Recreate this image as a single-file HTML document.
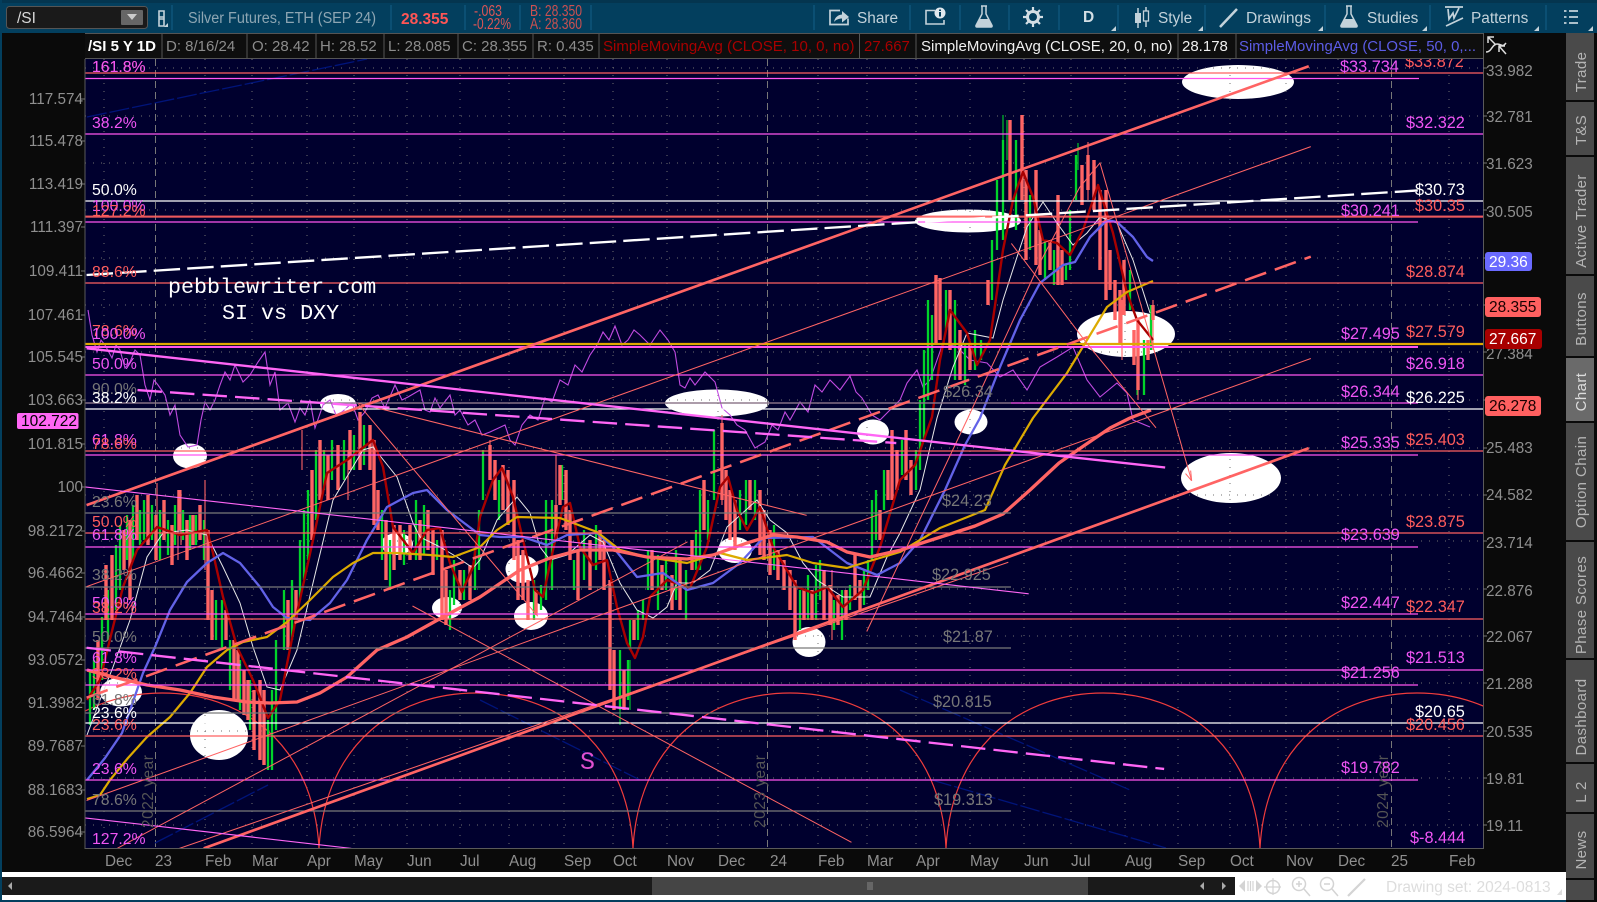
<!DOCTYPE html>
<html><head><meta charset="utf-8"><title>/SI chart</title>
<style>
html,body{margin:0;padding:0;background:#0a0a0a;width:1597px;height:902px;overflow:hidden}
svg{position:absolute;left:0;top:0;display:block}
text{font-family:"Liberation Sans",sans-serif;font-size:15.5px;white-space:pre}
.m{fill:#f055f5}.s{fill:#ff5c5c}.w{fill:#fff}.g{fill:#777}
.ax text{fill:#8f8f8f;font-size:15.3px}
.tb{fill:#c3d2da;font-size:15.4px}
.tab{fill:#b4b4b4;font-size:15px;letter-spacing:.4px;text-anchor:middle}
.lg{font-size:15px;fill:#8c8c8c}
.pc text{font-size:15.8px}
.d text{font-size:16.3px}
.yr{fill:#555;font-size:15.5px;letter-spacing:.5px}
</style></head><body>
<svg width="1597" height="902" viewBox="0 0 1597 902" xmlns="http://www.w3.org/2000/svg">
<defs><clipPath id="c"><rect x="85" y="59" width="1398" height="789"/></clipPath></defs>

<!-- frame -->
<rect width="1597" height="902" fill="#0a0a0a"/>
<rect width="1597" height="33" fill="#033f5e"/>
<rect width="1597" height="3" fill="#04354f"/>
<rect x="0" y="0" width="2" height="902" fill="#033f5e"/>
<rect x="0" y="900" width="1597" height="2" fill="#033f5e"/>

<!-- toolbar -->
<rect x="6.5" y="6.5" width="141" height="22" rx="3" fill="#1a1a1a" stroke="#555"/>
<text x="17" y="23" fill="#d8d8d8" font-size="15">/SI</text>
<rect x="121" y="10" width="22" height="15" rx="1" fill="#666"/>
<path d="M127 14h10l-5 6z" fill="#ccc"/>
<path d="M159 11h5v8h-5zM159 17h5v9h-5z" fill="none" stroke="#c3d2da" stroke-width="1.6"/>
<path d="M168 27h-4l4-4z" fill="#c3d2da"/>
<g stroke="#0e557a" stroke-width="1.5">
<path d="M172 5V30M391 5V30M465 5V30M520 5V30M591 5V30M814 5V30M910 5V30M960 5V30M1009 5V30M1059 5V30M1118 5V30M1205 5V30M1325 5V30M1430 5V30M1546 5V30"/>
</g>
<text x="188" y="23" fill="#8ea6b3" font-size="15" textLength="188" lengthAdjust="spacingAndGlyphs">Silver Futures, ETH (SEP 24)</text>
<text x="401" y="24" fill="#ff5555" font-size="17.7" font-weight="bold">28.355</text>
<text x="474" y="16" fill="#dd5555" font-size="12" textLength="28" lengthAdjust="spacingAndGlyphs">-.063</text>
<text x="473" y="29" fill="#dd5555" font-size="12" textLength="38" lengthAdjust="spacingAndGlyphs">-0.22%</text>
<text x="530" y="16" fill="#cc5050" font-size="12" textLength="52" lengthAdjust="spacingAndGlyphs">B: 28.350</text>
<text x="530" y="29" fill="#cc5050" font-size="12" textLength="52" lengthAdjust="spacingAndGlyphs">A: 28.360</text>

<!-- share -->
<path d="M840 10.500H830v14h18v-6" fill="none" stroke="#c3d2da" stroke-width="1.7"/>
<path d="M834 22c1-5 4-7 8-7.500V11l7 6-7 5.500V18.500c-3 0-6 1-8 3.500z" fill="#c3d2da"/>
<text x="857" y="23" class="tb">Share</text>
<!-- info book -->
<path d="M935 10.500H926v13.500h18v-4" fill="none" stroke="#c3d2da" stroke-width="1.6"/>
<circle cx="940" cy="13" r="5.500" fill="#dfe8ee"/><rect x="939" y="12" width="2" height="4.500" fill="#033f5e"/><rect x="939" y="9.500" width="2" height="1.500" fill="#033f5e"/>
<!-- flask -->
<path d="M981 6h6M982 6v8l-6 11.500c-.5 1 .2 1.500 1 1.500h14c.8 0 1.500-.5 1-1.500L986 14V6" fill="none" stroke="#c3d2da" stroke-width="1.500"/>
<path d="M979.500 19h9l3.500 7.500h-16z" fill="#c3d2da"/>
<!-- gear -->
<circle cx="1033" cy="17" r="5.500" fill="none" stroke="#d4dfe5" stroke-width="3"/>
<path d="M1033 7v4M1033 23v4M1023 17h4M1039 17h4M1026 10l3 3M1037 21l3 3M1040 10l-3 3M1029 21l-3 3" stroke="#d4dfe5" stroke-width="2.200"/>
<text x="1083" y="22" fill="#d4dfe5" font-size="14" font-weight="bold">D</text>
<!-- candle icon -->
<path d="M1138 8v20" stroke="#c3d2da" stroke-width="1.500"/><rect x="1135" y="13" width="6" height="10" fill="#c3d2da"/>
<path d="M1146 7v20" stroke="#c3d2da" stroke-width="1.500"/><rect x="1143.500" y="11" width="5" height="10" fill="#033f5e" stroke="#c3d2da" stroke-width="1.300"/>
<text x="1158" y="23" class="tb">Style</text>
<path d="M1220 27l17-18" stroke="#c3d2da" stroke-width="2.500"/>
<text x="1246" y="23" class="tb" style="font-size:15.6px">Drawings</text>
<path d="M1346 6h6M1347 6v8l-6 11.500c-.5 1 .2 1.500 1 1.500h14c.8 0 1.500-.5 1-1.500L1351 14V6" fill="none" stroke="#c3d2da" stroke-width="1.500"/>
<path d="M1344.500 19h9l3.500 7.500h-16z" fill="#c3d2da"/>
<text x="1367" y="23" class="tb">Studies</text>
<path d="M1445 7h18M1448 9l1 10 4-6 1 5 5-10M1446 26l17-8" fill="none" stroke="#c3d2da" stroke-width="1.700"/>
<text x="1471" y="23" class="tb">Patterns</text>
<path d="M1569 11h9M1569 17h9M1569 23h9M1564 11h2.500M1564 17h2.500M1564 23h2.500" stroke="#c3d2da" stroke-width="1.800"/>
<path d="M1116 26v5h-5zM1203 26v5h-5zM1323 26v5h-5zM1427 26v5h-5zM1539 26v5h-5zM1593 26v5h-5z" fill="#c3d2da"/>

<!-- legend -->
<rect x="85" y="33" width="1398" height="26" fill="#0e0e0e"/>
<path d="M85 33.500H1483M85 58.500H1483" stroke="#555"/>
<path d="M162 33V58M247 33V58M316 33V58M384 33V58M458 33V58M533 33V58M599 33V58M859.500 33V58M916 33V58M1178 33V58M1236 33V58" stroke="#555"/>
<text x="88" y="51" class="lg" style="fill:#fff;font-weight:bold" textLength="68" lengthAdjust="spacingAndGlyphs">/SI 5 Y 1D</text>
<text x="166" y="51" class="lg">D: 8/16/24</text>
<text x="252" y="51" class="lg">O: 28.42</text>
<text x="320" y="51" class="lg">H: 28.52</text>
<text x="388" y="51" class="lg">L: 28.085</text>
<text x="462" y="51" class="lg">C: 28.355</text>
<text x="537" y="51" class="lg">R: 0.435</text>
<text x="603" y="51" class="lg" style="fill:#a80000">SimpleMovingAvg (CLOSE, 10, 0, no)</text>
<text x="864" y="51" class="lg" style="fill:#a80000">27.667</text>
<text x="921" y="51" class="lg" style="fill:#f0f0f0">SimpleMovingAvg (CLOSE, 20, 0, no)</text>
<text x="1182" y="51" class="lg" style="fill:#f0f0f0">28.178</text>
<text x="1239" y="51" class="lg" style="fill:#5c5ce6" textLength="237" lengthAdjust="spacingAndGlyphs">SimpleMovingAvg (CLOSE, 50, 0,...</text>
<path d="M1488 37l8 8M1488 43v-6h6M1506 54l-7-8M1499 52v-6h6M1486 52c6 0 6-8 11-8s5 4 9-1" fill="none" stroke="#ddd" stroke-width="1.500"/>

<!-- chart bg -->
<rect x="85" y="59" width="1398" height="789" fill="#00002e"/>

<g clip-path="url(#c)">
<!-- ellipses -->
<g fill="#fff">
<ellipse cx="1238" cy="82" rx="56" ry="17"/>
<ellipse cx="968" cy="221" rx="53" ry="11.500"/>
<ellipse cx="1126" cy="334" rx="49" ry="23"/>
<ellipse cx="1231" cy="478" rx="50" ry="25"/>
<ellipse cx="717" cy="403" rx="52" ry="13.500"/>
<ellipse cx="338" cy="404" rx="18" ry="10"/>
<ellipse cx="190" cy="456" rx="17" ry="12.500"/>
<ellipse cx="873" cy="432" rx="16" ry="12.500"/>
<ellipse cx="971" cy="422" rx="16.500" ry="12.500"/>
<ellipse cx="397" cy="544" rx="16" ry="11"/>
<ellipse cx="447" cy="608" rx="15" ry="11"/>
<ellipse cx="522" cy="569" rx="16.500" ry="14"/>
<ellipse cx="531" cy="616" rx="17" ry="14"/>
<ellipse cx="735" cy="550" rx="17" ry="13"/>
<ellipse cx="809" cy="642" rx="16.500" ry="15"/>
<ellipse cx="121" cy="692" rx="21" ry="14.500"/>
<ellipse cx="219" cy="735" rx="29" ry="25"/>
</g>
<!-- grid -->
<path d="M85 68H1483M85 116H1483M85 163H1483M85 210H1483M85 258H1483M85 305H1483M85 352H1483M85 400H1483M85 448H1483M85 495H1483M85 541H1483M85 589H1483M85 636H1483M85 683H1483M85 731H1483M85 778H1483M85 825H1483" stroke="#707070" stroke-dasharray="1 7"/>
<path d="M104 59V848M205 59V848M252 59V848M307 59V848M354 59V848M407 59V848M460 59V848M509 59V848M564 59V848M613 59V848M667 59V848M718 59V848M818 59V848M867 59V848M916 59V848M970 59V848M1024 59V848M1071 59V848M1125 59V848M1178 59V848M1230 59V848M1286 59V848M1338 59V848M1449 59V848" stroke="#707070" stroke-dasharray="1 7"/>
<path d="M155.500 59V848M767.500 59V848M1391.500 59V848" stroke="#777" stroke-dasharray="7 4"/>
<!-- navy trend lines -->
<path d="M87 117L367 59M155 843L268 785M932 780L1166 848M480 700L640 780M900 690L1130 790" stroke="#00147a" fill="none" stroke-width="1.300" stroke-dasharray="20 3"/>

<!-- arcs -->
<g fill="none" stroke="#f03c3c" stroke-width="1.200">
<path d="M5 848C11 740 86 693 162 693C238 693 313 740 319 848"/>
<path d="M319 848C325 740 400 693 476 693C552 693 627 740 633 848"/>
<path d="M633 848C639 740 714 693 790 693C866 693 941 740 946 848"/>
<path d="M946 848C952 740 1027 693 1103 693C1179 693 1254 740 1260 848"/>
<path d="M1260 848C1266 740 1341 693 1417 693C1493 693 1568 740 1574 848"/>
</g>

<!-- purple dxy -->
<polyline fill="none" stroke="#c04ae0" stroke-width="1.100" points="88,310 92,335 97,352 101,340 105,345 112,358 116,345 120,350 125,368 130,362 135,350 140,355 145,385 150,400 154,380 158,385 165,395 170,415 175,405 180,435 188,447 197,445 201,420 205,402 210,410 215,400 220,385 225,372 230,380 235,365 243,382 250,375 258,362 265,352 270,385 275,372 280,410 288,403 295,422 300,408 305,415 310,400 315,428 323,405 330,400 336,415 342,412 352,403 358,420 365,412 372,398 378,395 385,408 395,385 402,400 408,397 420,390 425,410 430,412 435,398 440,408 450,395 455,415 460,410 468,425 475,420 482,435 490,432 505,425 510,440 515,445 522,425 530,415 538,420 545,398 552,402 560,380 568,385 575,365 582,372 590,355 597,345 603,332 609,340 615,326 622,345 628,340 634,330 640,335 650,345 660,330 668,340 675,352 680,385 685,388 690,378 695,385 705,372 715,382 722,408 730,415 737,425 745,430 755,448 765,442 772,425 778,430 785,412 790,420 800,402 808,412 815,385 822,392 830,380 840,390 850,376 856,392 862,398 872,415 880,420 890,410 900,400 907,383 917,370 923,387 930,380 943,343 957,347 970,360 987,363 1000,377 1013,370 1027,390 1040,367 1057,357 1073,347 1087,380 1100,397 1117,383 1127,393 1133,420 1150,427"/>

<!-- candles green -->
<path fill="none" stroke="#00d42a" stroke-width="2.300" d="M90 670V725M94 660V710M102 617V680M108 590V640M116 545V610M120 525V590M127 515V560M133 505V560M140 510V545M144 500V540M152 505V540M160 510V560M168 520V555M175 505V545M183 510V540M190 515V550M196 515V545M204 520V560M216 600V640M222 600V650M230 640V690M240 660V710M250 680V730M268 720V770M272 690V770M276 640V730M284 590V650M292 580V640M300 540V600M304 510V580M308 490V560M316 450V520M324 450V490M332 440V480M344 440V480M354 435V470M364 425V465M382 510V560M390 540V590M404 530V565M416 500V560M424 505V555M437 540V560M450 590V630M454 560V605M464 570V600M475 550V590M479 510V570M483 450V500M499 480V520M534 580V620M541 585V610M546 500V600M552 500V590M562 465V500M574 560V590M584 530V580M596 525V570M620 650V710M628 660V700M630 620V650M638 610V640M643 600V620M648 550V590M658 555V610M666 560V590M676 550V600M686 570V620M696 530V570M700 490V570M708 500V540M714 430V500M740 490V530M746 480V525M755 480V520M774 525V570M800 590V630M808 575V620M816 565V620M820 560V600M834 600V630M842 590V640M850 585V610M864 570V605M868 560V590M872 500V560M876 490V540M884 470V510M902 440V475M916 450V490M920 400V470M924 350V440M928 300V400M932 315V380M946 290V330M955 300V380M965 345V385M975 330V370M981 340V360M992 240V300M997 180V250M1003 140V240M1016 140V230M1030 195V250M1045 240V280M1054 250V285M1066 265V280M1070 210V270M1076 155V200M1130 270V310M1144 340V395M1151 305V350"/>
<!-- wicks -->
<path fill="none" stroke="#ff6464" stroke-width="1.100" d="M157 483V560M178 490V560M205 480V570M181 490V545M302 430V470M348 450V500M490 440V470M556 455V510M722 415V505M832 570V640M1088 142V200M1122 300V360M1138 320V400M1153 300V350"/>
<path fill="none" stroke="#00d42a" stroke-width="1.100" d="M1003 115V150M1007 120V160M1078 143V170M620 650V725M1137 395V340M630 660V710"/>
<!-- candles red -->
<path fill="none" stroke="#ff6464" stroke-width="3.400" d="M98 640V700M106 565V620M112 555V620M124 530V570M130 520V600M137 495V540M148 495V545M156 515V560M164 500V540M172 525V565M179 490V530M187 520V560M193 515V545M200 505V540M208 530V620M212 590V640M226 610V640M234 640V700M238 650V700M244 670V715M248 680V720M254 690V750M260 680V760M264 690V765M288 600V650M296 590V620M312 470V540M320 440V500M328 455V500M338 445V490M350 430V470M360 412V470M370 425V470M374 440V525M378 490V530M386 520V580M394 525V570M400 525V560M410 525V560M420 520V560M428 510V550M433 530V575M442 530V620M446 570V625M460 570V600M470 565V600M490 445V480M495 460V500M503 465V510M508 470V525M514 480V560M518 540V600M523 550V600M528 580V620M536 590V615M556 505V540M560 465V505M566 470V530M570 510V560M578 550V600M590 540V590M600 530V560M604 540V590M610 580V690M614 650V710M624 670V710M634 620V640M652 550V590M662 565V590M672 575V610M680 560V610M692 540V570M704 480V530M722 423V500M726 470V520M730 490V540M735 500V550M750 480V510M760 490V555M764 510V560M770 530V575M778 550V580M784 560V590M790 570V610M795 580V640M804 590V620M812 590V620M824 570V620M830 585V625M838 595V625M846 590V620M855 555V600M860 580V610M880 510V540M888 470V500M892 430V500M897 450V490M906 430V480M911 460V495M936 275V345M940 278V340M950 290V350M960 330V380M970 345V370M988 280V305M1010 120V200M1022 115V200M1026 170V260M1036 170V265M1040 230V275M1050 240V270M1058 195V285M1062 250V285M1082 165V205M1088 155V190M1094 160V210M1100 190V270M1106 190V300M1110 250V290M1115 280V320M1120 290V345M1124 260V315M1134 330V365M1138 320V390M1148 340V360M1153 305V320"/>

<!-- SMAs -->
<polyline fill="none" stroke="#e8e8e8" stroke-width="1" points="87,735 100,700 113,667 130,620 147,557 163,533 187,530 207,535 223,567 240,603 253,647 267,687 280,690 297,650 313,583 333,500 363,450 373,447 397,477 413,523 420,537 440,547 457,557 473,568 480,560 497,520 517,497 530,513 540,547 550,560 567,555 590,535 603,542 620,583 637,610 653,618 667,607 677,583 693,583 710,570 727,527 757,500 770,520 787,533 803,563 817,580 843,597 870,597 887,557 900,533 920,490 937,418 953,367 967,333 993,338 1003,300 1017,257 1027,227 1043,202 1057,223 1073,245 1087,233 1100,217 1117,223 1133,260 1150,313"/>
<polyline fill="none" stroke="#a80000" stroke-width="2.400" stroke-linejoin="round" points="87,700 100,680 113,627 123,587 137,550 157,527 180,535 207,530 213,553 223,597 237,647 253,680 268,718 280,700 297,613 313,540 327,473 347,460 373,440 383,467 393,527 413,553 427,530 440,528 450,563 462,592 473,567 480,517 493,480 502,468 513,497 523,540 535,590 543,597 553,550 563,507 570,503 580,547 593,565 607,560 617,607 627,643 635,658 643,637 650,597 667,580 690,588 707,547 720,487 728,477 737,510 747,530 760,507 773,547 797,587 813,593 827,587 843,607 863,590 880,547 900,480 915,465 932,417 940,360 950,310 967,333 977,365 990,340 1003,250 1013,200 1023,172 1033,197 1043,240 1057,243 1070,255 1083,230 1098,185 1113,233 1127,293 1137,320 1153,340"/>
<polyline fill="none" stroke="#6262e8" stroke-width="2.300" stroke-linejoin="round" points="87,780 105,758 122,733 143,673 155,647 170,610 187,582 207,563 223,553 240,563 260,587 273,607 287,618 310,620 330,603 347,580 367,540 387,507 413,493 427,490 447,510 480,535 500,537 523,537 547,545 567,535 597,533 613,547 637,577 663,573 687,590 713,583 740,563 763,538 813,537 847,563 877,575 900,563 920,540 945,490 965,445 980,418 1000,367 1020,320 1040,283 1063,265 1075,262 1090,237 1107,220 1117,222 1133,237 1147,257 1153,261"/>
<polyline fill="none" stroke="#dcaa00" stroke-width="2.200" stroke-linejoin="round" points="87,799 100,795 110,780 128,758 147,737 170,717 190,693 207,667 227,650 243,642 267,637 287,622 310,600 333,577 353,563 373,553 397,553 430,555 453,557 480,547 497,530 517,517 560,518 597,532 620,550 647,557 687,563 720,553 747,560 787,555 813,563 847,568 873,560 900,552 940,528 985,510 1005,465 1033,418 1067,373 1087,340 1107,307 1127,292 1153,281"/>
<polyline fill="none" stroke="#ff6464" stroke-width="3.300" stroke-linejoin="round" points="87,670 113,677 147,685 180,690 213,697 247,702 270,703 297,702 320,693 347,677 377,650 407,637 443,617 480,597 520,570 550,558 580,550 613,550 647,557 687,559 713,555 747,543 773,535 797,537 827,542 847,552 870,557 901,550 925,542 947,535 975,526 1003,514 1030,490 1059,463 1085,445 1110,428 1130,418 1151,410"/>

<!-- horizontal full -->
<path d="M85 73H1483M85 217H1483M85 283H1483M85 451H1483M85 533H1483M85 619H1483M85 736H1483" stroke="#ff6060" stroke-width="1.200"/>
<path d="M85 216.500H1483" stroke="#ff6060" stroke-width="2" opacity=".8"/>
<path d="M85 134H1483M85 375H1483M85 670H1483" stroke="#ff55f0" stroke-width="1.300"/>
<path d="M85 201H1483M85 409H1483M85 723H1483" stroke="#fff" stroke-width="1.300"/>
<!-- magenta short -->
<path d="M85 78.500H1419M85 222H1418M85 403H1418M85 455H1418M85 547H1418M85 614H1418M85 685H1418M85 780H1418" stroke="#ff55f0" stroke-width="1.300"/>
<path d="M85 347H1418" stroke="#ff55f0" stroke-width="2"/>
<path d="M85 344H1483" stroke="#e0a800" stroke-width="2.200"/>
<!-- gray short -->
<path d="M85 403H1011M85 513H1011M85 587H1011M85 648H1011M85 713H1011M85 811H1011" stroke="#7a7a7a" stroke-width="1.300"/>

<!-- drawings in screenshot-scale coordinates -->
<g transform="scale(1.0185)" fill="none">
<g stroke="#ff6464">
<path d="M85 496L1285 65" stroke-width="2.600"/>
<path d="M85 576L1287 144" stroke-width="1"/>
<path d="M85 685L1287 252" stroke-width="2.500" stroke-dasharray="22 9"/>
<path d="M85 786L1287 352" stroke-width="1"/>
<path d="M200 833L1285 440" stroke-width="2.600"/>
<path d="M150 842L990 552" stroke-width="1"/>
<path d="M115 833L675 532" stroke-width="1"/>
<path d="M352 397L528 605M405 595L836 827M352 396L792 506" stroke-width="1"/>
<path d="M851 620L950 411L1021 258L1060 184L1080 160L1170 472M993 239L1067 337L1135 420" stroke-width="1"/>
<path d="M1170 472l-1-10M1170 472l-6-7" stroke-width="1"/>
</g>
<g stroke="#ff66f5">
<path d="M85 342L1144 459" stroke-width="2.300"/>
<path d="M135 383L880 435" stroke-width="2.300" stroke-dasharray="24 8"/>
<path d="M85 636L1143 755" stroke-width="2.300" stroke-dasharray="24 8"/>
<path d="M83 478L1010 583" stroke-width="1.100"/>
<path d="M83 803L345 833" stroke-width="1.100"/>
</g>
<path d="M85 270L1392 187" stroke="#fff" stroke-width="2.300" stroke-dasharray="26 7"/>
</g>

<!-- year labels -->
<text class="yr" transform="translate(153,828) rotate(-90)">2022 year</text>
<text class="yr" transform="translate(765,828) rotate(-90)">2023 year</text>
<text class="yr" transform="translate(1388,828) rotate(-90)">2024 year</text>

<!-- pebblewriter -->
<text x="168" y="293" fill="#fff" style="font-family:'Liberation Mono',monospace;font-size:21.700px">pebblewriter.com</text>
<text x="222" y="319" fill="#fff" style="font-family:'Liberation Mono',monospace;font-size:21.700px">SI vs DXY</text>
<text x="580" y="769" fill="#e050d0" style="font-family:'Liberation Mono',monospace;font-size:25px">S</text>

<!-- percent labels -->
<g class="pc">
<text x="92" y="72" class="s">161.8%</text><text x="92" y="72" class="m">161.8%</text>
<text x="92" y="128" class="m">38.2%</text>
<text x="92" y="195" class="w">50.0%</text>
<text x="92" y="211" class="m">100.0%</text>
<text x="92" y="216" class="s">127.2%</text>
<text x="92" y="277" class="s">88.6%</text>
<text x="92" y="336" class="s">78.6%</text>
<text x="92" y="339" class="m">100.0%</text>
<text x="92" y="369" class="m">50.0%</text>
<text x="92" y="394" class="g">90.0%</text>
<text x="92" y="403" class="w">38.2%</text>
<text x="92" y="445" class="m">61.8%</text>
<text x="92" y="449" class="s">78.6%</text>
<text x="92" y="507" class="g">23.6%</text>
<text x="92" y="527" class="s">50.0%</text>
<text x="92" y="540" class="m">61.8%</text>
<text x="92" y="580" class="g">38.2%</text>
<text x="92" y="608" class="m">50.0%</text>
<text x="92" y="613" class="s">38.2%</text>
<text x="92" y="642" class="g">50.0%</text>
<text x="92" y="663" class="m">61.8%</text>
<text x="92" y="679" class="s">38.2%</text>
<text x="92" y="705" class="g">61.8%</text>
<text x="92" y="718" class="w">23.6%</text>
<text x="92" y="730" class="s">23.6%</text>
<text x="92" y="774" class="m">23.6%</text>
<text x="92" y="805" class="g">78.6%</text>
<text x="92" y="844" class="m">127.2%</text>
</g>

<!-- dollar labels -->
<g class="d">
<text x="1405" y="67" class="s">$33.872</text>
<text x="1340" y="72" class="m">$33.734</text>
<text x="1406" y="128" class="m">$32.322</text>
<text x="1415" y="195" class="w">$30.73</text>
<text x="1415" y="211" class="s">$30.35</text>
<text x="1341" y="216" class="m">$30.241</text>
<text x="1406" y="277" class="s">$28.874</text>
<text x="1341" y="339" class="m">$27.495</text>
<text x="1406" y="337" class="s">$27.579</text>
<text x="1406" y="369" class="m">$26.918</text>
<text x="1341" y="397" class="m">$26.344</text>
<text x="1406" y="403" class="w">$26.225</text>
<text x="1341" y="448" class="m">$25.335</text>
<text x="1406" y="445" class="s">$25.403</text>
<text x="1406" y="527" class="s">$23.875</text>
<text x="1341" y="540" class="m">$23.639</text>
<text x="1341" y="608" class="m">$22.447</text>
<text x="1406" y="612" class="s">$22.347</text>
<text x="1406" y="663" class="m">$21.513</text>
<text x="1341" y="678" class="m">$21.256</text>
<text x="1415" y="717" class="w">$20.65</text>
<text x="1406" y="730" class="s">$20.456</text>
<text x="1341" y="773" class="m">$19.782</text>
<text x="1410" y="843" class="m">$-8.444</text>
<text x="943" y="397" class="g">$26.34</text>
<text x="942" y="506" class="g">$24.23</text>
<text x="932" y="580" class="g">$22.925</text>
<text x="943" y="642" class="g">$21.87</text>
<text x="933" y="707" class="g">$20.815</text>
<text x="934" y="805" class="g">$19.313</text>
</g>
</g>

<!-- chart borders -->
<path d="M85 59V848.500H1483.500V33" fill="none" stroke="#5a5a5a"/>
<path d="M81 99h4M81 141h4M81 184h4M81 227h4M81 271h4M81 315h4M81 357h4M81 400h4M81 444h4M81 487h4M81 531h4M81 573h4M81 617h4M81 660h4M81 703h4M81 746h4M81 790h4M81 832h4" stroke="#777"/>
<path d="M1483 68h4M1483 116h4M1483 163h4M1483 210h4M1483 258h4M1483 305h4M1483 352h4M1483 400h4M1483 448h4M1483 495h4M1483 541h4M1483 589h4M1483 636h4M1483 683h4M1483 731h4M1483 778h4M1483 825h4" stroke="#777"/>

<!-- left axis -->
<g class="ax" text-anchor="end">
<text x="83" y="104">117.574</text><text x="83" y="146">115.478</text><text x="83" y="189">113.419</text><text x="83" y="232">111.397</text><text x="83" y="276">109.411</text><text x="83" y="320">107.461</text><text x="83" y="362">105.545</text><text x="83" y="405">103.663</text><text x="83" y="449">101.815</text><text x="83" y="492">100</text><text x="83" y="536">98.2172</text><text x="83" y="578">96.4662</text><text x="83" y="622">94.7464</text><text x="83" y="665">93.0572</text><text x="83" y="708">91.3982</text><text x="83" y="751">89.7687</text><text x="83" y="795">88.1683</text><text x="83" y="837">86.5964</text>
</g>
<rect x="17" y="413" width="61.500" height="16" rx="2" fill="#ff66f5"/>
<text x="21" y="426" fill="#000" font-size="15">102.722</text>

<!-- right axis -->
<g class="ax">
<text x="1486" y="76">33.982</text><text x="1486" y="122">32.781</text><text x="1486" y="169">31.623</text><text x="1486" y="217">30.505</text><text x="1486" y="359">27.384</text><text x="1486" y="453">25.483</text><text x="1486" y="500">24.582</text><text x="1486" y="548">23.714</text><text x="1486" y="596">22.876</text><text x="1486" y="642">22.067</text><text x="1486" y="689">21.288</text><text x="1486" y="737">20.535</text><text x="1486" y="784">19.81</text><text x="1486" y="831">19.11</text>
</g>
<rect x="1485" y="252" width="47" height="19" rx="3" fill="#6a6aff"/><text x="1489" y="267" fill="#fff" font-size="15.300">29.36</text>
<rect x="1485" y="297" width="56" height="20" rx="3" fill="#ff6060"/><text x="1489" y="312" fill="#1a0000" font-size="15.300">28.355</text>
<rect x="1485" y="329" width="57" height="20" rx="3" fill="#a80000"/><text x="1489" y="344" fill="#fff" font-size="15.300">27.667</text>
<rect x="1485" y="396" width="56" height="20" rx="3" fill="#ff6060"/><text x="1489" y="411" fill="#1a0000" font-size="15.300">26.278</text>

<!-- x axis -->
<g class="ax">
<text x="105" y="866">Dec</text><text x="155" y="866">23</text><text x="205" y="866">Feb</text><text x="252" y="866">Mar</text><text x="307" y="866">Apr</text><text x="354" y="866">May</text><text x="407" y="866">Jun</text><text x="460" y="866">Jul</text><text x="509" y="866">Aug</text><text x="564" y="866">Sep</text><text x="613" y="866">Oct</text><text x="667" y="866">Nov</text><text x="718" y="866">Dec</text><text x="770" y="866">24</text><text x="818" y="866">Feb</text><text x="867" y="866">Mar</text><text x="916" y="866">Apr</text><text x="970" y="866">May</text><text x="1024" y="866">Jun</text><text x="1071" y="866">Jul</text><text x="1125" y="866">Aug</text><text x="1178" y="866">Sep</text><text x="1230" y="866">Oct</text><text x="1286" y="866">Nov</text><text x="1338" y="866">Dec</text><text x="1391" y="866">25</text><text x="1449" y="866">Feb</text>
</g>

<!-- bottom bar -->
<rect x="2" y="872" width="1564" height="28" fill="#fff"/>
<rect x="2" y="877" width="1233" height="18" fill="#1a1a1a"/>
<rect x="652" y="877" width="436" height="18" fill="#454545"/>
<path d="M868 882v8M870 882v8M872 882v8" stroke="#888"/>
<path d="M12 882l-4 4 4 4zM1204 882l-4 4 4 4zM1222 882l4 4-4 4z" fill="#aaa"/>
<g fill="none" stroke="#d4d4d4" stroke-width="1.500">
<path d="M1245 880l-6 6 6 6zM1256 880l6 6-6 6z" fill="#d4d4d4" stroke="none"/>
<path d="M1248 881v10M1250.500 881v10M1253 881v10" stroke-width="1.200"/>
<circle cx="1273" cy="887" r="6.500"/><path d="M1273 878v17M1264 887h17" stroke-width="1.200"/>
<circle cx="1299" cy="884" r="6.500"/><path d="M1304 889l6 7M1296 884h6M1299 881v6" stroke-width="1.500"/>
<circle cx="1327" cy="884" r="6.500"/><path d="M1332 889l6 7M1324 884h6" stroke-width="1.500"/>
<path d="M1348 896l17-17" stroke-width="2.200"/>
</g>
<text x="1386" y="892" fill="#ddd" font-size="16.200">Drawing set: 2024-0813</text>
<path d="M1562 889v6h-5z" fill="#ddd"/>

<!-- side tabs -->
<rect x="1566" y="33" width="31" height="869" fill="#0a0a0a"/>
<g fill="#4a4a4a">
<rect x="1566" y="33" width="28" height="67"/>
<rect x="1566" y="102" width="28" height="53"/>
<rect x="1566" y="157" width="28" height="117"/>
<rect x="1566" y="276" width="28" height="80"/>
<rect x="1566" y="358" width="28" height="63" fill="#6a6a6a"/>
<rect x="1566" y="423" width="28" height="117"/>
<rect x="1566" y="542" width="28" height="116"/>
<rect x="1566" y="660" width="28" height="102"/>
<rect x="1566" y="764" width="28" height="48"/>
<rect x="1566" y="814" width="28" height="64"/>
<rect x="1566" y="880" width="28" height="20"/>
</g>
<text class="tab" transform="translate(1586,72) rotate(-90)">Trade</text>
<text class="tab" transform="translate(1586,130) rotate(-90)">T&amp;S</text>
<text class="tab" transform="translate(1586,221) rotate(-90)">Active Trader</text>
<text class="tab" transform="translate(1586,319) rotate(-90)">Buttons</text>
<text class="tab" transform="translate(1586,392) rotate(-90)" style="fill:#ddd">Chart</text>
<text class="tab" transform="translate(1586,482) rotate(-90)">Option Chain</text>
<text class="tab" transform="translate(1586,605) rotate(-90)">Phase Scores</text>
<text class="tab" transform="translate(1586,717) rotate(-90)">Dashboard</text>
<text class="tab" transform="translate(1586,792) rotate(-90)">L 2</text>
<text class="tab" transform="translate(1586,850) rotate(-90)">News</text>
</svg>
</body></html>
